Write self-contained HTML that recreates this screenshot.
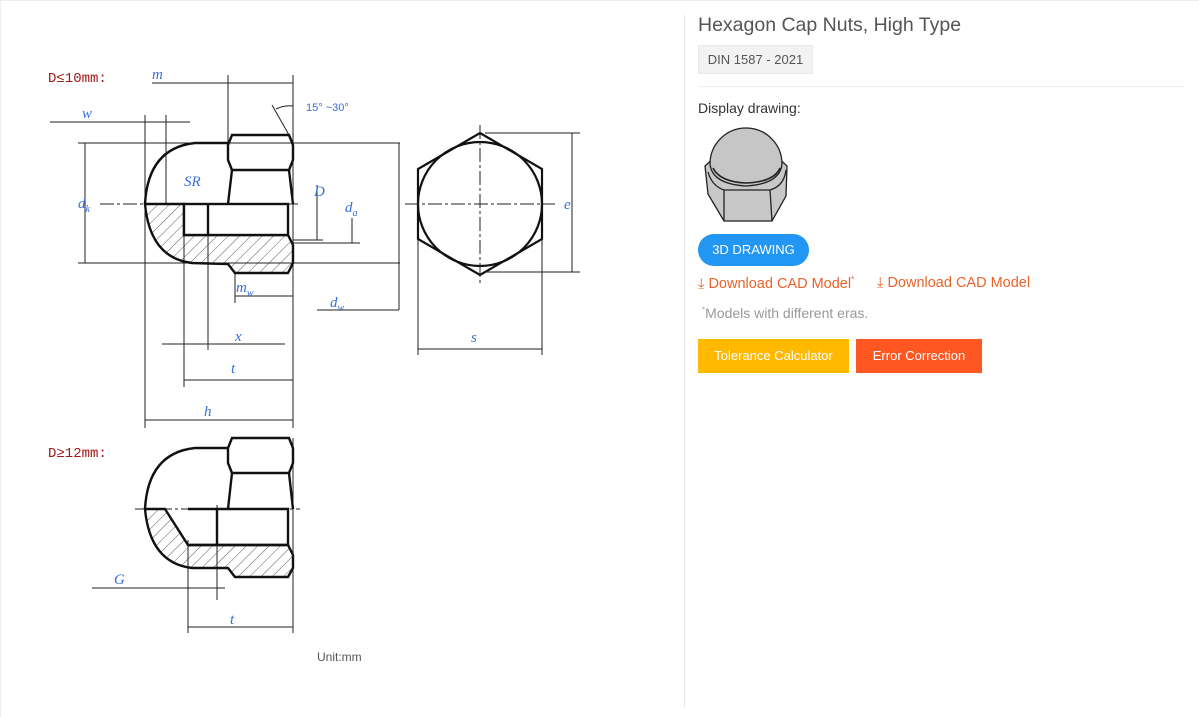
<!DOCTYPE html>
<html><head><meta charset="utf-8"><style>
body{margin:0;width:1199px;height:717px;background:#fff;font-family:"Liberation Sans",sans-serif;position:relative;overflow:hidden}
.a{position:absolute}
.lbl{font-family:"Liberation Serif",serif;font-style:italic;fill:#3a6fd8;font-size:15px}
</style></head><body>
<div class="a" style="left:0;top:0;width:1199px;height:1px;background:#eee"></div>
<div class="a" style="left:0;top:0;width:1px;height:717px;background:#eee"></div>
<div class="a" style="left:684px;top:15px;width:1px;height:692px;background:#e6e6e6"></div>
<svg class="a" style="left:0;top:0" width="684" height="717">
<defs><pattern id="h" width="8" height="8" patternUnits="userSpaceOnUse" patternTransform="rotate(45)"><line x1="0" y1="0" x2="0" y2="8" stroke="#333" stroke-width="0.8"/></pattern></defs>
<g stroke="#222" stroke-width="1" fill="none">
<line x1="152" y1="83" x2="293" y2="83"/><line x1="228" y1="75" x2="228" y2="145"/><line x1="293" y1="75" x2="293" y2="428"/>
<line x1="50" y1="122" x2="190" y2="122"/><line x1="145" y1="115" x2="145" y2="428"/><line x1="166" y1="115" x2="166" y2="205"/>
<line x1="78" y1="143" x2="400" y2="143"/><line x1="78" y1="263" x2="400" y2="263"/><line x1="85" y1="143" x2="85" y2="263"/>
<line x1="399" y1="143" x2="399" y2="310"/><line x1="317" y1="310" x2="399" y2="310"/>
<line x1="317" y1="185" x2="317" y2="240"/><line x1="352" y1="218" x2="352" y2="243"/><line x1="293" y1="240" x2="323" y2="240"/><line x1="293" y1="243" x2="360" y2="243"/>
<line x1="235" y1="296" x2="293" y2="296"/><line x1="235" y1="273" x2="235" y2="303"/>
<line x1="162" y1="344" x2="285" y2="344"/><line x1="208" y1="205" x2="208" y2="350"/><line x1="184" y1="235" x2="184" y2="387"/>
<line x1="184" y1="380" x2="293" y2="380"/><line x1="145" y1="420" x2="293" y2="420"/>
<line x1="272" y1="105" x2="289" y2="135"/><path d="M276 109 Q285 105 293 106"/>
<line x1="100" y1="204" x2="300" y2="204" stroke-dasharray="14 3 3 3"/>
</g>
<g stroke="#111" stroke-width="2.4" fill="none">
<path d="M145 204 L184 204 L184 235 L288 235 L293 245 L293 263 L288 273 L235 273 L228 264 L192 263 Q150 258 145 204Z" fill="url(#h)"/>
<path d="M145 204 Q148 148 195 143 L228 143"/>
<path d="M232 135 L289 135 L293 145 L293 160 L289 170 L232 170 L228 160 L228 145Z"/>
<path d="M232 170 L228 204 M289 170 L293 204"/>
<rect x="184" y="204" width="104" height="31" fill="#fff"/>
<line x1="208" y1="204" x2="208" y2="235"/>
</g>
<g stroke="#111" stroke-width="2.2" fill="none">
<polygon points="480,133 542,169 542,239 480,275 418,239 418,169"/>
<circle cx="480" cy="204" r="62"/>
</g>
<g stroke="#222" stroke-width="1" fill="none">
<line x1="405" y1="204" x2="555" y2="204" stroke-dasharray="14 3 3 3"/><line x1="480" y1="125" x2="480" y2="285" stroke-dasharray="14 3 3 3"/>
<line x1="485" y1="133" x2="580" y2="133"/><line x1="485" y1="272" x2="580" y2="272"/><line x1="572" y1="133" x2="572" y2="272"/>
<line x1="418" y1="240" x2="418" y2="355"/><line x1="542" y1="240" x2="542" y2="355"/><line x1="418" y1="349" x2="542" y2="349"/>
</g>
<g stroke="#222" stroke-width="1" fill="none">
<line x1="92" y1="588" x2="225" y2="588"/><line x1="188" y1="540" x2="188" y2="633"/><line x1="217" y1="505" x2="217" y2="600"/>
<line x1="293" y1="438" x2="293" y2="633"/><line x1="188" y1="627" x2="293" y2="627"/>
<line x1="135" y1="509" x2="300" y2="509" stroke-dasharray="14 3 3 3"/>
</g>
<g stroke="#111" stroke-width="2.4" fill="none">
<path d="M145 509 L165 509 L188 545 L288 545 L293 555 L293 568 L288 577 L235 577 L228 568 L192 568 Q150 563 145 509Z" fill="url(#h)"/>
<path d="M145 509 Q148 453 195 448 L228 448"/>
<path d="M232 438 L289 438 L293 448 L293 463 L289 473 L232 473 L228 463 L228 448Z"/>
<path d="M232 473 L228 509 M289 473 L293 509"/>
<path d="M188 509 L288 509 L288 545 L188 545"/><line x1="217" y1="509" x2="217" y2="545"/>
</g>
<g font-family="Liberation Mono,monospace" fill="#a01818" font-size="14"><text x="48" y="82">D≤10mm:</text><text x="48" y="457">D≥12mm:</text></g>
<text x="306" y="111" fill="#3a6fd8" font-size="11">15°  ~30°</text>
<g class="lbl">
<text x="152" y="79">m</text><text x="82" y="118">w</text><text x="184" y="186">SR</text><text x="78" y="208">d<tspan font-size="10" dy="4">k</tspan></text>
<text x="314" y="196">D</text><text x="345" y="212">d<tspan font-size="10" dy="4">a</tspan></text><text x="564" y="209">e</text>
<text x="236" y="292">m<tspan font-size="10" dy="4">w</tspan></text><text x="330" y="307">d<tspan font-size="10" dy="4">w</tspan></text>
<text x="235" y="341">x</text><text x="471" y="342">s</text><text x="231" y="373">t</text><text x="204" y="416">h</text>
<text x="114" y="584">G</text><text x="230" y="624">t</text>
</g>
<text x="317" y="661" fill="#555" font-size="12">Unit:mm</text>
</svg>
<div class="a" style="left:698px;top:14px;font-size:19.5px;color:#555">Hexagon Cap Nuts, High Type</div>
<div class="a" style="left:698px;top:45px;width:115px;height:29px;background:#f2f2f2;border:1px solid #eaeaea;box-sizing:border-box;font-size:13px;color:#555;line-height:28px;text-align:center">DIN 1587 - 2021</div>
<div class="a" style="left:698px;top:86px;width:485px;height:1px;background:#eee"></div>
<div class="a" style="left:698px;top:100px;font-size:14px;color:#333">Display drawing:</div>
<svg class="a" style="left:700px;top:124px" width="95" height="100">
<g stroke="#222" stroke-width="1.3" fill="#c8c8c8">
<polygon points="5,42 20,28 72,28 87,42 86,72 72,97 24,97 8,70"/>
<path d="M8,48 Q12,62 24,66 L70,66 Q84,62 86,46" fill="none"/>
<line x1="24" y1="66" x2="24" y2="97"/><line x1="70" y1="66" x2="72" y2="97"/>
<path d="M10,40 A36,36 0 0 1 82,40 Q80,60 46,62 Q12,60 10,40Z" fill="#c6c6c6"/>
<path d="M13,44 Q20,58 46,59 Q74,58 80,44" fill="none" stroke-width="1.6"/>
</g></svg>
<div class="a" style="left:698px;top:234px;width:111px;height:32px;border-radius:16px;background:#2196f3;color:#fff;font-size:13px;line-height:32px;text-align:center">3D DRAWING</div>
<div class="a" style="left:698px;top:275px;font-size:14.5px;color:#e8632a;white-space:nowrap">⤓ Download CAD Model<sup style="font-size:8px">*</sup></div>
<div class="a" style="left:877px;top:275px;font-size:14.5px;color:#e8632a;white-space:nowrap">⤓ Download CAD Model</div>
<div class="a" style="left:702px;top:305px;font-size:14px;color:#999"><sup style="font-size:8px">*</sup>Models with different eras.</div>
<div class="a" style="left:698px;top:339px;width:151px;height:34px;background:#ffb900;color:#fff;font-size:13px;line-height:34px;text-align:center">Tolerance Calculator</div>
<div class="a" style="left:856px;top:339px;width:126px;height:34px;background:#ff5722;color:#fff;font-size:13px;line-height:34px;text-align:center">Error Correction</div>
</body></html>
